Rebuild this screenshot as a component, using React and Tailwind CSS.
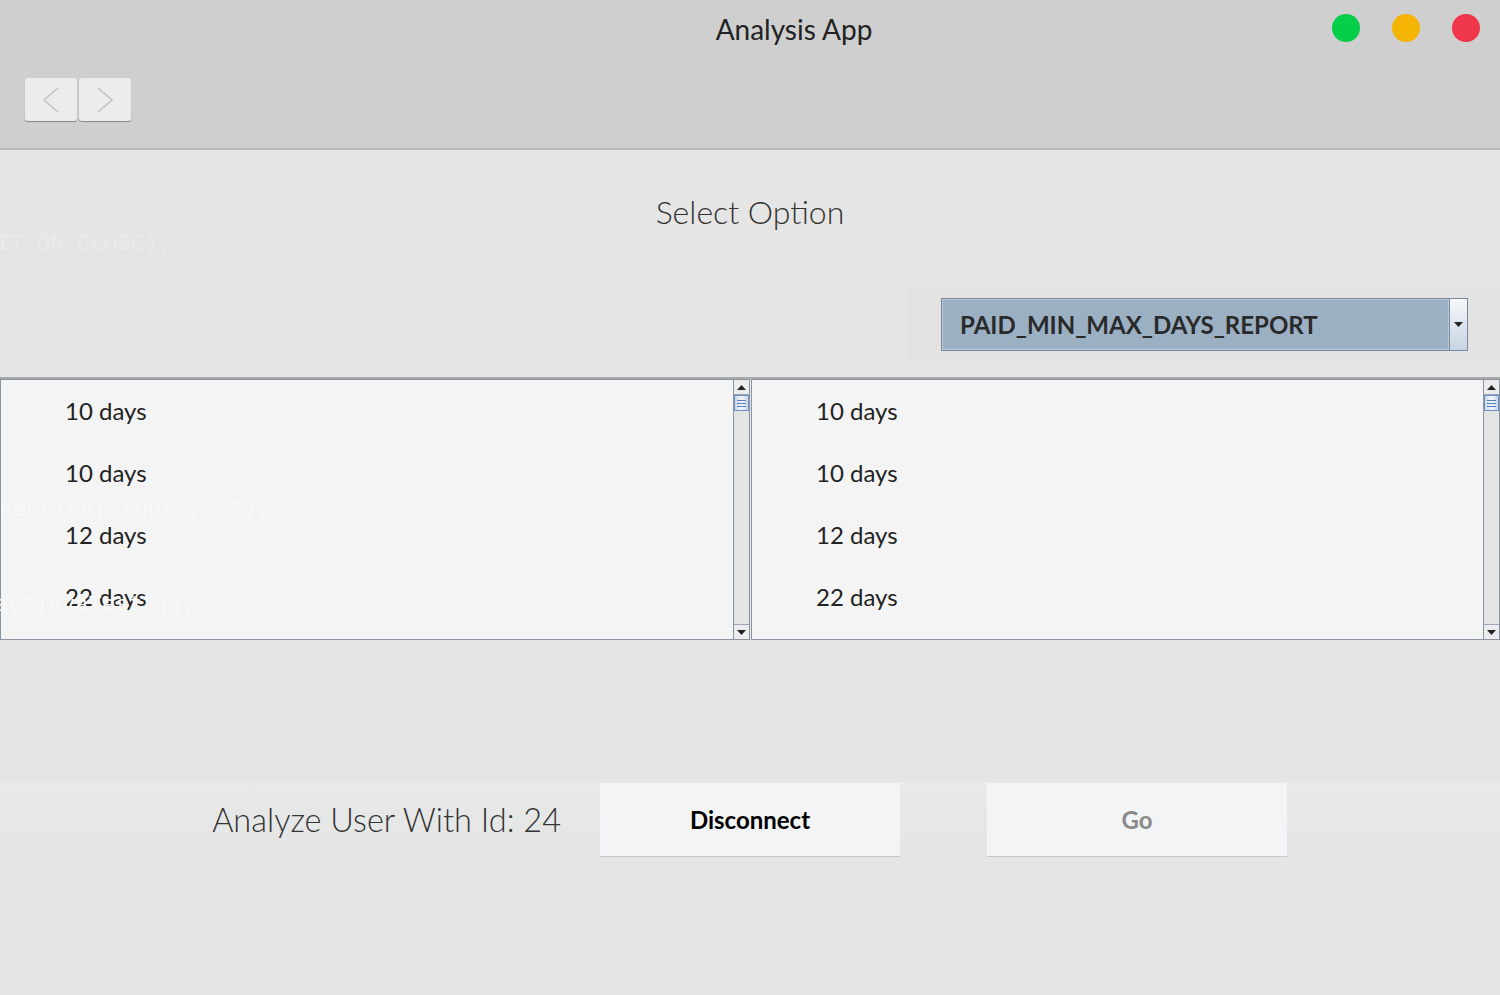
import React from "react";

const items = ["10 days", "10 days", "12 days", "22 days"];

function ScrollBar() {
  return (
    <div className="w-[16px] h-full flex flex-col border-l border-[#8a95a4] bg-[#e4e4e4]">
      {/* up arrow */}
      <div className="h-[15px] flex items-center justify-center bg-[#ececec] border-b border-[#9aa6b5]">
        <svg width="9" height="5" viewBox="0 0 9 5">
          <path d="M0 5 L4.5 0 L9 5 Z" fill="#222" />
        </svg>
      </div>
      {/* thumb */}
      <div className="h-[16px] flex flex-col items-center justify-center gap-[2px] border border-[#6e8fc4] bg-gradient-to-r from-[#c8d6ea] via-[#f4f7fb] to-[#c8d6ea]">
        <div className="w-[9px] h-px bg-[#5b7fc0]" />
        <div className="w-[9px] h-px bg-[#5b7fc0]" />
        <div className="w-[9px] h-px bg-[#5b7fc0]" />
      </div>
      <div className="flex-1" />
      {/* down arrow */}
      <div className="h-[15px] flex items-center justify-center bg-[#ececec] border-t border-[#9aa6b5]">
        <svg width="9" height="5" viewBox="0 0 9 5">
          <path d="M0 0 L4.5 5 L9 0 Z" fill="#222" />
        </svg>
      </div>
    </div>
  );
}

function DayList({ className }) {
  return (
    <div className={"h-full flex bg-[#f4f4f4] border border-[#8a95a4] " + className}>
      <div className="flex-1 flex flex-col">
        {items.map((d, i) => (
          <div key={i} className="h-[62px] flex items-center pl-[64px] text-[24px] text-[#222]">
            {d}
          </div>
        ))}
      </div>
      <ScrollBar />
    </div>
  );
}

export default function App() {
  return (
    <div
      className="relative w-[1500px] h-[995px] overflow-hidden bg-[#e5e5e5] flex flex-col"
      style={{ fontFamily: "Lato, 'Open Sans', sans-serif" }}
    >
      {/* Ghost code text bleeding through the window */}
      <div
        className="absolute left-[-4px] top-[228px] text-[22.5px] text-[#eaeaea] whitespace-pre"
        style={{ fontFamily: "'Liberation Mono', monospace" }}
      >
        IT_ON_CLOSE);
      </div>

      {/* Title bar */}
      <div className="h-[150px] shrink-0 bg-[#cfcfcf] border-b-2 border-[#b9b9b9] flex flex-col">
        <div className="h-[58px] flex items-start">
          <div className="flex-1 flex justify-center pl-[256px] pt-[11px]">
            <span className="text-[28px] leading-[36px] text-[#222]">Analysis App</span>
          </div>
          <div className="flex gap-[32px] pt-[14px] pr-[20px]">
            <div className="w-[28px] h-[28px] rounded-full bg-[#04cf48]" />
            <div className="w-[28px] h-[28px] rounded-full bg-[#f5b505]" />
            <div className="w-[28px] h-[28px] rounded-full bg-[#f0364a]" />
          </div>
        </div>
        <div className="flex gap-[2px] pl-[25px] pt-[20px]">
          <button className="w-[52px] h-[43px] rounded-[3px] bg-[#ececec] shadow-[0_1px_1px_rgba(0,0,0,0.35)] flex items-center justify-center">
            <svg width="20" height="28" viewBox="0 0 20 28" fill="none">
              <path d="M17 2 L3 14 L17 26" stroke="#c4c4c4" strokeWidth="1.6" />
            </svg>
          </button>
          <button className="w-[52px] h-[43px] rounded-[3px] bg-[#ececec] shadow-[0_1px_1px_rgba(0,0,0,0.35)] flex items-center justify-center">
            <svg width="20" height="28" viewBox="0 0 20 28" fill="none">
              <path d="M3 2 L17 14 L3 26" stroke="#c4c4c4" strokeWidth="1.6" />
            </svg>
          </button>
        </div>
      </div>

      {/* Option header */}
      <div className="h-[227px] shrink-0 flex flex-col">
        <div className="pt-[42px] text-center">
          <span className="text-[32px] leading-[40px] font-light text-[#333]">Select Option</span>
        </div>
        <div className="mt-[56px] ml-[908px] h-[72px] bg-[#e3e3e3] pl-[33px] pt-[10px]">
          <div className="w-[527px] h-[53px] flex border border-[#7a8798]">
            <div className="flex-1 flex items-center pl-[17px] bg-[#9cb0c4] border border-[#b8c9da]">
              <span className="text-[24px] font-bold text-[#2a2a2a]">PAID_MIN_MAX_DAYS_REPORT</span>
            </div>
            <div className="w-[18px] flex items-center justify-center border-l border-[#7a8798] bg-gradient-to-b from-[#f7f8fa] to-[#c6d4e2]">
              <svg width="9" height="5" viewBox="0 0 9 5">
                <path d="M0 0 L4.5 5 L9 0 Z" fill="#222" />
              </svg>
            </div>
          </div>
        </div>
      </div>

      {/* Lists */}
      <div className="relative h-[263px] shrink-0 border-t-2 border-[#a9a9a9] flex">
        <DayList className="w-[750px]" />
        <DayList className="flex-1 ml-px" />
        <div
          className="absolute left-[-14px] top-[115px] text-[22.5px] text-[#f9f9f9] whitespace-pre pointer-events-none"
          style={{ fontFamily: "'Liberation Mono', monospace" }}
        >
          nnection("root", "");
        </div>
        <div
          className="absolute left-[-6px] top-[210px] text-[22.5px] text-[#f9f9f9] whitespace-pre pointer-events-none"
          style={{ fontFamily: "'Liberation Mono', monospace" }}
        >
          e("javaTest"));
        </div>
      </div>

      {/* Bottom actions */}
      <div className="mt-[142px] h-[76px] flex items-center bg-gradient-to-b from-[#e8e9ea] to-[#e5e5e5]">
        <div className="w-[561px] text-right">
          <span className="text-[32.5px] font-light text-[#333]">Analyze User With Id: 24</span>
        </div>
        <button className="ml-[39px] w-[300px] h-[74px] bg-[#f3f4f5] border-b border-[#c8c8c8] text-[24px] font-bold text-black">
          Disconnect
        </button>
        <button className="ml-[87px] w-[300px] h-[74px] bg-[#f3f4f5] border-b border-[#c8c8c8] text-[24px] font-bold text-[#8a8a8a]">
          Go
        </button>
      </div>
    </div>
  );
}
